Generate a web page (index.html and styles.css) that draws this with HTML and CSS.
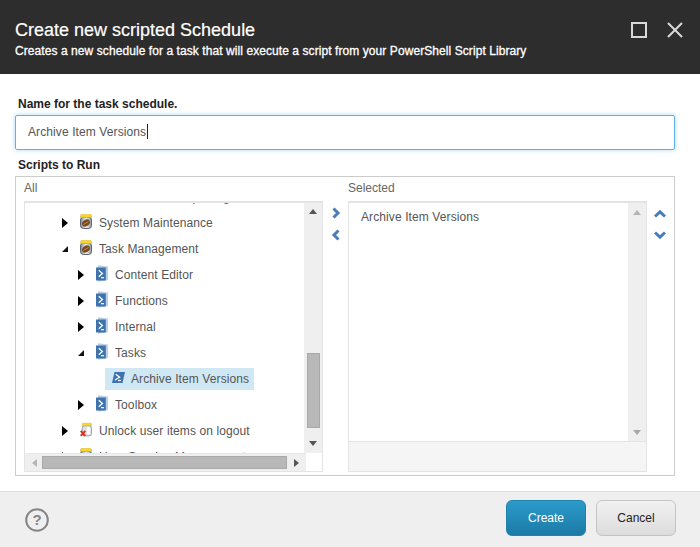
FILE: index.html
```html
<!DOCTYPE html>
<html lang="en">
<head>
<meta charset="utf-8">
<title>Create new scripted Schedule</title>
<link rel="stylesheet" href="styles.css">
</head>
<body>
<svg class="defs" width="0" height="0" aria-hidden="true">
  <defs>
    <linearGradient id="glass" x1="0" y1="0" x2="1" y2="0">
      <stop offset="0" stop-color="#7d8794"/><stop offset=".5" stop-color="#eef1f4"/><stop offset="1" stop-color="#8f98a3"/>
    </linearGradient>
    <symbol id="jar" viewBox="0 0 12 15">
      <rect x=".5" y="3" width="11" height="11.500" rx="3" fill="url(#glass)" stroke="#5b6470"/>
      <path d="M1.200.4h9.600l.7 1v2H.5v-2z" fill="#f7d92d" stroke="#dca90f" stroke-width=".5"/>
      <ellipse cx="6" cy="9" rx="4.200" ry="3.200" transform="rotate(-35 6 9)" fill="#7a4a1c"/>
      <path d="M3.500 10.500 8.500 7.500" stroke="#d0a062" stroke-width=".8"/>
    </symbol>
    <symbol id="jar-x" viewBox="0 0 14 16">
      <rect x="2.500" y="3.500" width="11" height="12" rx="3" fill="#dfe3e8" stroke="#8d95a0"/>
      <rect x="8.500" y="5" width="3" height="8.500" fill="#fff"/>
      <path d="M3.200.6h9.600l.7 1v2h-11v-2z" fill="#f7d92d" stroke="#dca90f" stroke-width=".5"/>
      <path d="M.8 9.500l5.400 6M6.200 9.500l-5.400 6" stroke="#d8301f" stroke-width="2.200"/>
    </symbol>
    <symbol id="ps" viewBox="0 0 12 17">
      <path d="M2 .2 12 1.500V15L2 16.800z" fill="#b9cfe6"/>
      <path d="M0 2.500h9.800V15.500H0z" fill="#3f73ae"/>
      <path d="M2.800 5.200l3.600 3.300-3.600 3.200" fill="none" stroke="#fff" stroke-width="1.300"/>
      <path d="M5 12.700h3" stroke="#fff" stroke-width="1.200"/>
    </symbol>
    <symbol id="ps-doc" viewBox="0 0 13 11">
      <path d="M2.500 0H13L10.500 11H0z" fill="#3f73ae"/>
      <path d="M3.800 2.300 7.600 5.200 3 8" fill="none" stroke="#fff" stroke-width="1.300"/>
      <path d="M6 8.500h3" stroke="#fff" stroke-width="1.200"/>
    </symbol>
  </defs>
</svg>

<main class="dialog">
  <header class="head">
    <div class="head-text">
      <h1 class="title">Create new scripted Schedule</h1>
      <p class="subtitle">Creates a new schedule for a task that will execute a script from your PowerShell Script Library</p>
    </div>
    <div class="win-btns">
      <svg class="win-icon" viewBox="0 0 16 16"><rect x="1" y="1" width="14" height="14" fill="none" stroke="#d9d9d9" stroke-width="2"/></svg>
      <svg class="win-icon" viewBox="0 0 16 16"><path d="M1 1l14 14M15 1 1 15" stroke="#d9d9d9" stroke-width="2" fill="none"/></svg>
    </div>
  </header>

  <section class="form">
    <label class="label">Name for the task schedule.</label>
    <div class="input"><span>Archive Item Versions</span><i class="caret"></i></div>
    <div class="label label-scripts">Scripts to Run</div>

    <div class="picker">
      <div class="col col-all">
        <div class="col-title">All</div>
        <div class="listbox tree-box">
          <div class="tree-view">
            <div class="tree">
              <div class="row l1 clipped"><span class="tw"></span><svg class="ic jar"><use href="#jar"/></svg><span>Content Tools Reporting</span></div>
              <div class="row l1"><span class="tw closed"></span><svg class="ic jar"><use href="#jar"/></svg><span>System Maintenance</span></div>
              <div class="row l1"><span class="tw open"></span><svg class="ic jar"><use href="#jar"/></svg><span>Task Management</span></div>
              <div class="row l2"><span class="tw closed"></span><svg class="ic ps"><use href="#ps"/></svg><span>Content Editor</span></div>
              <div class="row l2"><span class="tw closed"></span><svg class="ic ps"><use href="#ps"/></svg><span>Functions</span></div>
              <div class="row l2"><span class="tw closed"></span><svg class="ic ps"><use href="#ps"/></svg><span>Internal</span></div>
              <div class="row l2"><span class="tw open"></span><svg class="ic ps"><use href="#ps"/></svg><span>Tasks</span></div>
              <div class="row l3"><div class="sel"><svg class="ic-doc"><use href="#ps-doc"/></svg><span>Archive Item Versions</span></div></div>
              <div class="row l2"><span class="tw closed"></span><svg class="ic ps"><use href="#ps"/></svg><span>Toolbox</span></div>
              <div class="row l1"><span class="tw closed"></span><svg class="ic jar"><use href="#jar-x"/></svg><span>Unlock user items on logout</span></div>
              <div class="row l1"><span class="tw closed"></span><svg class="ic jar"><use href="#jar"/></svg><span>User Session Management</span></div>
            </div>
            <div class="vbar">
              <span class="arr up dark"></span>
              <span class="thumb-v"></span>
              <span class="arr down dark"></span>
            </div>
          </div>
          <div class="hbar">
            <span class="arr left"></span>
            <span class="thumb-h"></span>
            <span class="arr right dark"></span>
          </div>
        </div>
      </div>

      <div class="move">
        <svg class="chev" viewBox="0 0 12 12"><path d="M3.500 1.500 8 6l-4.500 4.500" /></svg>
        <svg class="chev" viewBox="0 0 12 12"><path d="M8.500 1.500 4 6l4.500 4.500" /></svg>
      </div>

      <div class="col col-sel">
        <div class="col-title">Selected</div>
        <div class="listbox sel-box">
          <div class="sel-view">
            <div class="sel-list">Archive Item Versions</div>
            <div class="vbar light">
              <span class="arr up"></span>
              <span class="arr down"></span>
            </div>
          </div>
          <div class="sel-foot"></div>
        </div>
      </div>

      <div class="order">
        <svg class="chev" viewBox="0 0 12 12"><path d="M1 8.500 6 3.800l5 4.700" /></svg>
        <svg class="chev" viewBox="0 0 12 12"><path d="M1 3.500 6 8.200l5-4.700" /></svg>
      </div>
    </div>
  </section>

  <footer class="foot">
    <svg class="help" viewBox="0 0 24 24">
      <circle cx="12" cy="12" r="10.800" fill="none" stroke="#858585" stroke-width="2"/>
      <text x="12" y="17" text-anchor="middle" class="help-q">?</text>
    </svg>
    <div class="actions">
      <button class="btn primary" type="button">Create</button>
      <button class="btn" type="button">Cancel</button>
    </div>
  </footer>
</main>
</body>
</html>
```

FILE: styles.css
```css
* { box-sizing: border-box; }
html, body { margin: 0; padding: 0; height: 100%; }
body { font-family: "Liberation Sans", Arial, sans-serif; background: #fff; color: #4a4a4a; overflow: hidden; }
.defs { display: block; height: 0; }

.dialog { width: 700px; height: 547px; display: flex; flex-direction: column; }

.head { height: 74px; flex: none; background: #2d2d2d; color: #fff; display: flex; justify-content: space-between; padding: 20px 17px 0 15px; }
.title { margin: 0; font-size: 18px; line-height: 20px; font-weight: 400; -webkit-text-stroke: .2px #fff; }
.subtitle { margin: 3px 0 0; font-size: 12px; line-height: 16px; font-weight: 400; letter-spacing: .075px; -webkit-text-stroke: .3px #fff; }
.win-btns { display: flex; gap: 20px; padding-top: 2px; }
.win-icon { width: 16px; height: 16px; display: block; }

.form { flex: 1; padding: 22px 25px 0 15px; min-height: 0; }
.label { display: block; margin-left: 3px; font-size: 12px; line-height: 16px; font-weight: 700; color: #222; }
.input { margin-top: 3px; height: 35px; border: 1px solid #64aeea; border-radius: 2px; box-shadow: 0 0 4px rgba(100,174,234,.55); padding: 0 12px 2px; display: flex; align-items: center; font-size: 12px; letter-spacing: .1px; color: #555; }
.caret { width: 1px; height: 15px; background: #222; margin-left: 1px; }
.label-scripts { margin-top: 7px; }

.picker { margin-top: 3px; height: 300px; border: 1px solid #ccc; padding-left: 8px; display: flex; }
.col-title { font-size: 12px; line-height: 16px; padding-top: 3px; height: 24px; color: #666; }
.col-all { width: 299px; flex: none; }
.col-sel { width: 299px; flex: none; }
.listbox { height: 271px; border: 1px solid #e4e4e4; border-top-width: 2px; display: flex; flex-direction: column; }

.tree-view { height: 250px; display: flex; flex: none; }
.tree { flex: 1; min-width: 0; overflow: hidden; }
.row { height: 26px; display: flex; align-items: center; font-size: 12px; letter-spacing: .1px; color: #555; white-space: nowrap; }
.row.clipped { margin-top: -19px; }
.l1 { padding-left: 37px; }
.l2 { padding-left: 53px; }
.l3 { padding-left: 80px; }
.tw { width: 6px; height: 10px; flex: none; margin-right: 12px; }
.tw.closed { border-left: 6px solid #000; border-top: 5px solid transparent; border-bottom: 5px solid transparent; }
.tw.open { width: 0; height: 0; margin-right: 12px; border-bottom: 6px solid #111; border-left: 6px solid transparent; }
.ic { flex: none; margin-right: 7px; margin-top: -3px; }
.ic.jar { width: 12px; height: 15px; }
.ic.ps { width: 12px; height: 17px; }
.sel { display: flex; align-items: center; width: 149px; height: 22px; background: #cfe8f4; padding-left: 7px; }
.ic-doc { width: 13px; height: 11px; margin-right: 6px; margin-top: -4px; flex: none; }

.vbar { width: 18px; flex: none; background: #efefef; display: flex; flex-direction: column; align-items: center; justify-content: space-between; padding: 6px 0 7px; }
.thumb-v { width: 13px; height: 75px; margin-top: auto; margin-bottom: 13px; background: #b8b8b8; border: 1px solid #a9a9a9; }
.hbar { height: 18px; flex: none; width: 281px; background: #efefef; display: flex; align-items: center; padding: 0 7px; border-top: 1px solid #e6e6e6; }
.thumb-h { width: 245px; height: 13px; margin: 0 7px 0 5px; background: #b8b8b8; border: 1px solid #a9a9a9; flex: none; }
.arr { width: 0; height: 0; display: block; flex: none; border-style: solid; border-color: transparent; }
.arr.up { border-width: 0 4px 5px; border-bottom-color: #b5b5b5; }
.arr.down { border-width: 5px 4px 0; border-top-color: #a8a8a8; }
.arr.left { border-width: 4px 5px 4px 0; border-right-color: #b5b5b5; }
.arr.right { border-width: 4px 0 4px 5px; border-left-color: #555; }
.arr.up.dark { border-bottom-color: #555; }
.arr.down.dark { border-top-color: #555; }

.move { width: 25px; flex: none; padding-top: 30px; display: flex; flex-direction: column; align-items: center; gap: 10px; }
.order { width: 26px; flex: none; padding-top: 31px; display: flex; flex-direction: column; align-items: center; gap: 9px; }
.chev { width: 12px; height: 12px; display: block; fill: none; stroke: #4a7db8; stroke-width: 3; }

.sel-view { flex: 1; display: flex; min-height: 0; }
.sel-list { flex: 1; font-size: 12px; letter-spacing: .1px; line-height: 16px; padding: 6px 12px; color: #555; }
.sel-foot { height: 30px; flex: none; background: #f5f5f5; border-top: 1px solid #e4e4e4; }
.vbar.light { padding: 7px 0 6px; }

.foot { height: 56px; flex: none; background: #efefef; border-top: 1px solid #dedede; display: flex; justify-content: space-between; padding: 8px 24px 0 25px; }
.help { width: 24px; height: 24px; margin-top: 8px; }
.help-q { font-family: "Liberation Sans", Arial, sans-serif; font-size: 15px; font-weight: 700; fill: #858585; }
.actions { display: flex; gap: 10px; }
.btn { width: 80px; height: 36px; border-radius: 6px; border: 1px solid #c4c4c4; background: linear-gradient(#f1f1f1, #dcdcdc); font: 12px "Liberation Sans", Arial, sans-serif; color: #222; padding: 0; }
.btn.primary { background: linear-gradient(#2b9bcb, #1c7aa6); border-color: #2183ad; color: #fff; }
```
